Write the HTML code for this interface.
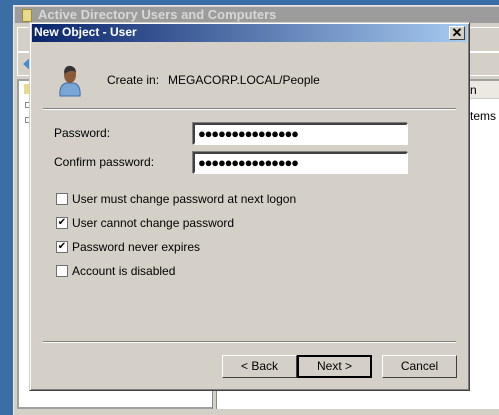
<!DOCTYPE html><html><head><style>
body{margin:0;width:499px;height:406px;overflow:hidden;background:#3a6ea5;position:relative;font-family:"Liberation Sans",sans-serif;font-size:12px;}
.a{position:absolute;box-sizing:border-box;white-space:nowrap}
.pw{font-size:13px;line-height:17px;padding-left:3px;letter-spacing:-1.2px;font-weight:bold}
</style></head><body>
<div class="a" style="left:13px;top:5px;width:490px;height:410px;background:#d4d0c8;border-left:1px solid #e8e8e8;border-top:1px solid #e8e8e8"></div>
<div class="a" style="left:15px;top:7px;width:484px;height:16px;background:#9c9c9c"></div>
<div class="a" style="left:22px;top:9px;width:10px;height:13px;background:#e9d98a;border:1px solid #a08a30"></div>
<div class="a" style="left:38px;top:7px;color:#d8d8d8;font-weight:bold;font-size:13px">Active Directory Users and Computers</div>
<div class="a" style="left:17px;top:27px;width:482px;height:25px;border:1px solid #fff;border-right:none"></div>
<div class="a" style="left:17px;top:52px;width:482px;height:24px;border:1px solid #fff;border-right:none"></div>
<div class="a" style="left:23px;top:57px;width:0;height:0;border-top:7px solid transparent;border-bottom:7px solid transparent;border-right:8px solid #3a8fd8"></div>
<div class="a" style="left:17px;top:79px;width:200px;height:330px;background:#fff;border:2px solid #a0a0a0"></div>
<div class="a" style="left:24px;top:84px;width:8px;height:10px;background:#e9d98a"></div>
<div class="a" style="left:25px;top:102px;width:6px;height:6px;border:1px solid #888"></div>
<div class="a" style="left:25px;top:117px;width:6px;height:6px;border:1px solid #888"></div>
<div class="a" style="left:212px;top:79px;width:5px;height:330px;background:#d4d0c8;border-left:1px solid #888;border-right:1px solid #888"></div>
<div class="a" style="left:217px;top:79px;width:290px;height:330px;background:#fff;border-top:2px solid #a0a0a0"></div>
<div class="a" style="left:217px;top:81px;width:290px;height:18px;background:#ece9e2;border-bottom:1px solid #ccc"></div>
<div class="a" style="left:470px;top:83px;font-size:12px">n</div>
<div class="a" style="left:470px;top:109px;font-size:12px">tems to</div>
<div class="a" style="left:29px;top:22px;width:441px;height:369px;background:#d4d0c8;border:1px solid #d4d0c8;border-right-color:#404040;border-bottom-color:#404040;box-shadow:inset 1px 1px 0 #fff,inset -1px -1px 0 #808080"></div>
<div class="a" style="left:32px;top:24px;width:435px;height:18px;background:linear-gradient(90deg,#0a246a,#a6caf0)"></div>
<div class="a" style="left:34px;top:25px;color:#fff;font-weight:bold;font-size:12px">New Object - User</div>
<div class="a" style="left:449px;top:26px;width:16px;height:14px;background:#d4d0c8;border:1px solid;border-color:#fff #404040 #404040 #fff;font-size:13px;line-height:11px;text-align:center;font-weight:bold">✕</div>
<svg class="a" style="left:56px;top:63px" width="28" height="34" viewBox="0 0 28 34">
<path d="M4 33 Q3 22 10 20 L18 20 Q25 22 24 33 Z" fill="#7aa6d6" stroke="#3d6da8"/>
<ellipse cx="14" cy="12" rx="6" ry="8" fill="#8a5a3a"/>
<path d="M8 9 Q9 2 15 3 Q20 4 20 10 L18 8 Q13 7 9 11Z" fill="#333"/>
</svg>
<div class="a" style="left:107px;top:73px">Create in:</div>
<div class="a" style="left:168px;top:73px">MEGACORP.LOCAL/People</div>
<div class="a" style="left:43px;top:108px;width:413px;height:2px;border-top:1px solid #808080;border-bottom:1px solid #fff"></div>
<div class="a" style="left:54px;top:126px">Password:</div>
<div class="a" style="left:54px;top:155px">Confirm password:</div>
<div class="a pw" style="left:193px;top:123px;width:215px;height:22px;background:#fff;border:2px solid;border-color:#404040 #fff #fff #404040;box-shadow:-1px -1px 0 #808080">●●●●●●●●●●●●●●●</div>
<div class="a pw" style="left:193px;top:152px;width:215px;height:22px;background:#fff;border:2px solid;border-color:#404040 #fff #fff #404040;box-shadow:-1px -1px 0 #808080">●●●●●●●●●●●●●●●</div>
<div class="a" style="left:56px;top:193px;width:12px;height:12px;background:#fff;border:1px solid #707070"></div>
<div class="a" style="left:56px;top:217px;width:12px;height:12px;background:#fff;border:1px solid #707070;font-size:10px;line-height:10px;text-align:center">✔</div>
<div class="a" style="left:56px;top:241px;width:12px;height:12px;background:#fff;border:1px solid #707070;font-size:10px;line-height:10px;text-align:center">✔</div>
<div class="a" style="left:56px;top:265px;width:12px;height:12px;background:#fff;border:1px solid #707070"></div>
<div class="a" style="left:72px;top:192px">User must change password at next logon</div>
<div class="a" style="left:72px;top:216px">User cannot change password</div>
<div class="a" style="left:72px;top:240px">Password never expires</div>
<div class="a" style="left:72px;top:264px">Account is disabled</div>
<div class="a" style="left:43px;top:341px;width:413px;height:2px;border-top:1px solid #808080;border-bottom:1px solid #fff"></div>
<div class="a" style="left:222px;top:355px;width:75px;height:23px;border:1px solid;border-color:#fff #404040 #404040 #fff;text-align:center;line-height:20px;font-size:12px">&lt; Back</div>
<div class="a" style="left:297px;top:355px;width:75px;height:23px;border:2px solid #000;text-align:center;line-height:19px;font-size:12px">Next &gt;</div>
<div class="a" style="left:382px;top:355px;width:75px;height:23px;border:1px solid;border-color:#fff #404040 #404040 #fff;text-align:center;line-height:20px;font-size:12px">Cancel</div>
</body></html>
